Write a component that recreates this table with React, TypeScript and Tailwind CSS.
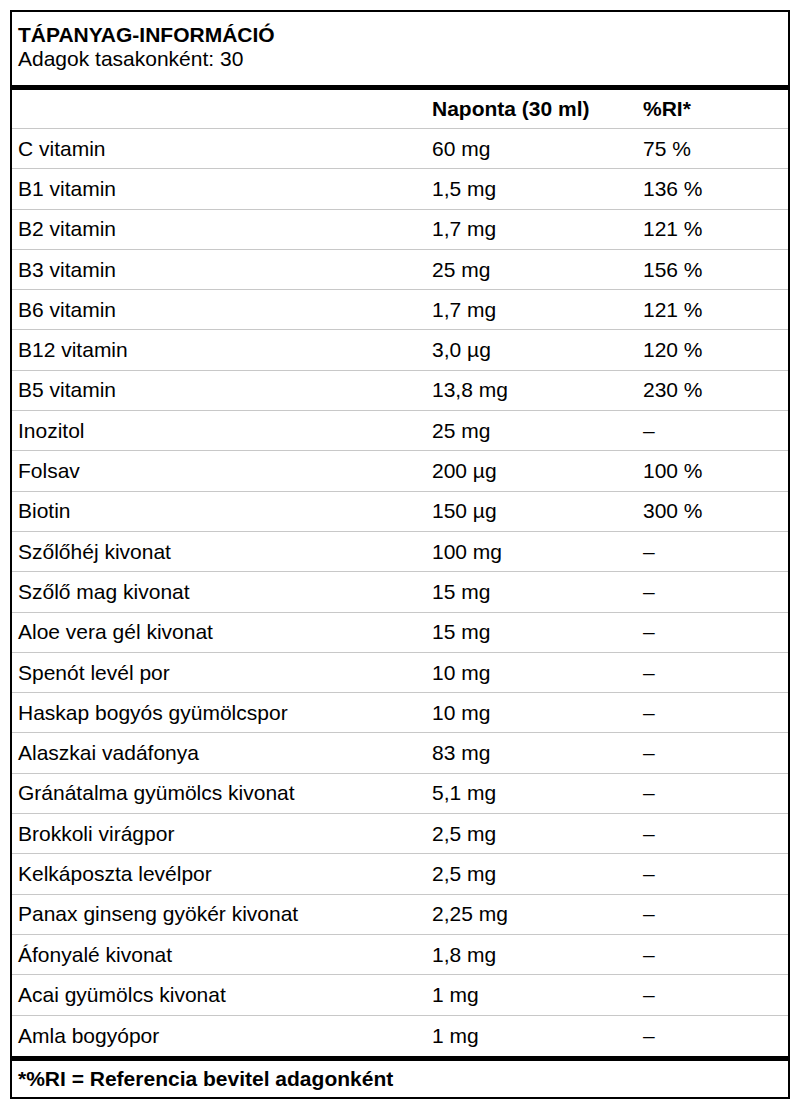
const rows: [string, string, string][] = [
  ["C vitamin", "60 mg", "75 %"],
  ["B1 vitamin", "1,5 mg", "136 %"],
  ["B2 vitamin", "1,7 mg", "121 %"],
  ["B3 vitamin", "25 mg", "156 %"],
  ["B6 vitamin", "1,7 mg", "121 %"],
  ["B12 vitamin", "3,0 µg", "120 %"],
  ["B5 vitamin", "13,8 mg", "230 %"],
  ["Inozitol", "25 mg", "–"],
  ["Folsav", "200 µg", "100 %"],
  ["Biotin", "150 µg", "300 %"],
  ["Szőlőhéj kivonat", "100 mg", "–"],
  ["Szőlő mag kivonat", "15 mg", "–"],
  ["Aloe vera gél kivonat", "15 mg", "–"],
  ["Spenót levél por", "10 mg", "–"],
  ["Haskap bogyós gyümölcspor", "10 mg", "–"],
  ["Alaszkai vadáfonya", "83 mg", "–"],
  ["Gránátalma gyümölcs kivonat", "5,1 mg", "–"],
  ["Brokkoli virágpor", "2,5 mg", "–"],
  ["Kelkáposzta levélpor", "2,5 mg", "–"],
  ["Panax ginseng gyökér kivonat", "2,25 mg", "–"],
  ["Áfonyalé kivonat", "1,8 mg", "–"],
  ["Acai gyümölcs kivonat", "1 mg", "–"],
  ["Amla bogyópor", "1 mg", "–"],
];

export default function App() {
  return (
    <div className="bg-white p-[10px] font-['Liberation_Sans',Arial,sans-serif] text-[21px] leading-[24px] text-black">
      <div className="border-2 border-black w-[780px]">
        <div className="px-[6px] pt-[11px] pb-[14px] border-b-[5px] border-black">
          <div className="font-bold">TÁPANYAG-INFORMÁCIÓ</div>
          <div>Adagok tasakonként: 30</div>
        </div>

        <div className="grid grid-cols-[414px_211px_1fr] h-[39px] items-center border-b border-[#c8c8c8] font-bold">
          <div className="px-[6px]"></div>
          <div className="px-[6px]">Naponta (30 ml)</div>
          <div className="px-[6px]">%RI*</div>
        </div>

        {rows.map((r, i) => (
          <div
            key={r[0]}
            className={
              "grid grid-cols-[414px_211px_1fr] h-[40.3px] items-center " +
              (i < rows.length - 1 ? "border-b border-[#c8c8c8]" : "")
            }
          >
            <div className="px-[6px]">{r[0]}</div>
            <div className="px-[6px]">{r[1]}</div>
            <div className="px-[6px]">{r[2]}</div>
          </div>
        ))}

        <div className="border-t-[5px] border-black h-[41px] flex items-center px-[6px] font-bold">
          *%RI = Referencia bevitel adagonként
        </div>
      </div>
    </div>
  );
}
